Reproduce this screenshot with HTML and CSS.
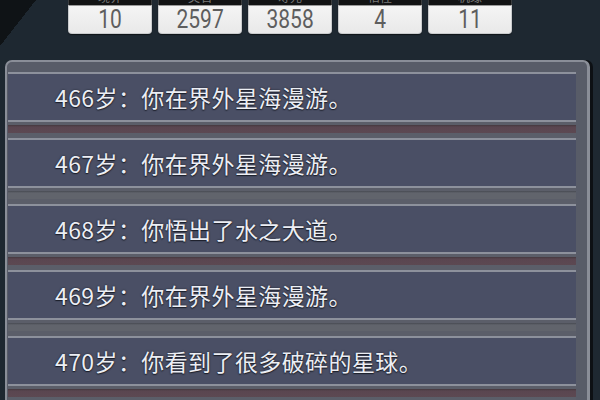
FILE: index.html
```html
<!DOCTYPE html>
<html lang="zh">
<head>
<meta charset="utf-8">
<title>人生记录</title>
<link rel="stylesheet" href="styles.css">
</head>
<body>
<div class="stats">
  <div class="stat"><div class="label">境界</div><div class="value"><span>10</span></div></div>
  <div class="stat"><div class="label">灵石</div><div class="value"><span>2597</span></div></div>
  <div class="stat"><div class="label">寿元</div><div class="value"><span>3858</span></div></div>
  <div class="stat"><div class="label">悟性</div><div class="value"><span>4</span></div></div>
  <div class="stat"><div class="label">机缘</div><div class="value"><span>11</span></div></div>
</div>
<div class="panel">
  <div class="entry">466岁：你在界外星海漫游。</div>
  <div class="entry">467岁：你在界外星海漫游。</div>
  <div class="entry">468岁：你悟出了水之大道。</div>
  <div class="entry">469岁：你在界外星海漫游。</div>
  <div class="entry">470岁：你看到了很多破碎的星球。</div>
  <div class="entry">471岁：你在界外星海漫游。</div>
</div>
</body>
</html>
```
FILE: styles.css
```css
html, body {
  margin: 0;
  padding: 0;
  height: 100%;
  overflow: hidden;
}
body {
  background-color: #1e2831;
  background-image: linear-gradient(to bottom right, #0f1316 50%, transparent 50%);
  background-size: 36px 46px;
  background-repeat: no-repeat;
  font-family: "Noto Sans CJK SC", "Noto Sans", sans-serif;
}
.stats {
  display: flex;
  gap: 6px;
  padding-left: 68px;
  margin-top: -13px;
  height: 47px;
}
.stat {
  width: 84px;
  display: flex;
  flex-direction: column;
}
.label {
  height: 18px;
  background: #121314;
  color: #7a7a7a;
  font-size: 12px;
  line-height: 17px;
  text-align: center;
  overflow: hidden;
  border: 1px solid #3a3c3e;
  border-bottom: none;
  box-sizing: border-box;
}
.value {
  height: 29px;
  background: linear-gradient(#f4f4f4, #e9e9e9);
  border: 1px solid #c9cbcd;
  border-top: 1px solid #9a9a9a;
  border-radius: 0 0 4px 4px;
  box-sizing: border-box;
  text-align: center;
  box-shadow: 0 1px 1px rgba(0,0,0,0.5);
}
.value span {
  display: inline-block;
  font-family: Roboto, "Liberation Sans", sans-serif;
  font-size: 25px;
  line-height: 27px;
  color: #5e5e5e;
  transform: scaleX(0.84);
}
.panel {
  margin: 26px 10px 0 5px;
  border: 2px solid #8a8e98;
  border-right-width: 3px;
  border-radius: 7px 7px 0 0;
  background: #585c68;
  padding: 10px 11px 0 1px;
  box-shadow: 3px 0 0 #0d1014;
  height: 400px;
}
.entry {
  height: 46px;
  border-top: 2px solid #8d919c;
  border-bottom: 2px solid #8d919c;
  background: #4a4f65;
  color: #eceef4;
  font-size: 23px;
  letter-spacing: 0.4px;
  line-height: 46px;
  padding-left: 47px;
  text-shadow: 0 0 2px #1c1f2a, 0 1px 1px #1c1f2a;
  position: relative;
  margin-bottom: 16px;
}
.entry::after {
  content: "";
  position: absolute;
  left: 0;
  right: 0;
  top: 48px;
  height: 16px;
  background: linear-gradient(#5b5e69 0, #5b5e69 3px, #45393f 3px, #5a4650 5px, #5c4952 11px, #5b5e69 11px, #5b5e69 16px);
}
.entry:nth-child(even)::after {
  background: linear-gradient(#5b5e69 0, #5b5e69 3px, #474a52 3px, #61646c 5px, #61646c 11px, #5b5e69 11px, #5b5e69 16px);
}
```
